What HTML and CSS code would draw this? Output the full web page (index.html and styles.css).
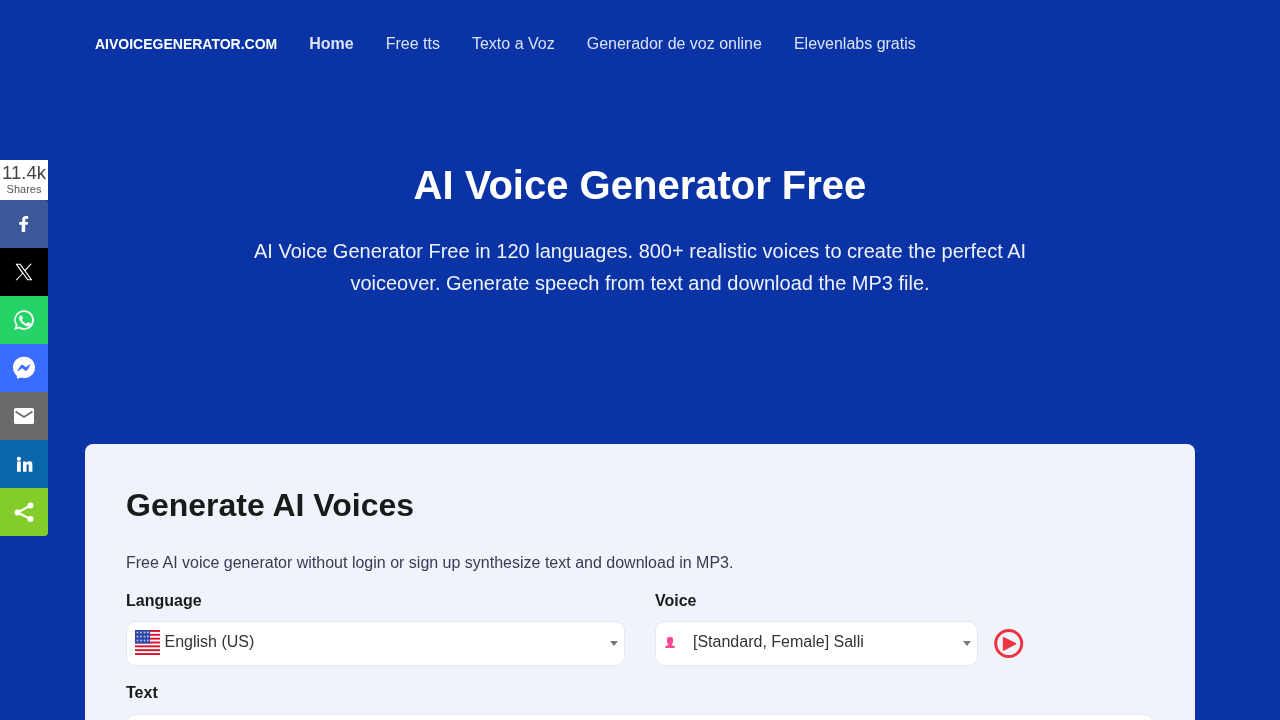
FILE: index.html
```html
<!DOCTYPE html>
<html lang="en">
<head>
<meta charset="utf-8">
<title>AI Voice Generator Free</title>
<link rel="stylesheet" href="styles.css">
</head>
<body>
<aside class="share">
  <div class="share-count"><span class="share-num">11.4k</span><span class="share-label">Shares</span></div>
  <a class="share-btn fb" href="#"><svg viewBox="0 0 24 24" width="24" height="24"><path fill="#fff" d="M13.200 20v-7.200h2.500l.4-2.900h-2.900V8.100c0-.8.2-1.400 1.400-1.400h1.600V4.100c-.3 0-1.200-.1-2.300-.1-2.200 0-3.700 1.300-3.700 3.700v2.200H7.200v2.900h2.500V20z"/></svg></a>
  <a class="share-btn tw" href="#"><svg viewBox="0 0 24 24" width="20" height="20"><path fill="#fff" d="M13.900 10.500 21.500 2h-1.800l-6.600 7.400L7.800 2H1.700l8 11.500L1.700 22h1.800l7-7.900 5.600 7.900h6.100zM4.200 3.300h2.800l12.700 17.500h-2.800z"/></svg></a>
  <a class="share-btn wa" href="#"><svg viewBox="0 0 24 24" width="24" height="24"><path fill="#fff" fill-rule="evenodd" d="M12.100 2.200a9.800 9.800 0 0 0-8.400 14.800L2.300 21.800l5-1.300a9.800 9.800 0 1 0 4.800-18.300zm0 1.800a8 8 0 1 1-4.300 14.800l-.4-.2-2.600.7.700-2.500-.3-.4A8 8 0 0 1 12.100 4z"/><path fill="#fff" d="M8.800 7.300c-.2 0-.5.100-.8.400-.3.300-1 1-1 2.400s1 2.800 1.200 3c.1.200 2 3.100 4.900 4.300 2.400 1 2.900.8 3.400.7.500 0 1.700-.7 1.900-1.300.2-.7.200-1.200.2-1.300-.1-.2-.3-.2-.6-.4l-1.900-.9c-.3-.1-.5-.1-.7.200l-.9 1.100c-.2.200-.3.200-.6.100-.3-.2-1.200-.5-2.300-1.500-.9-.8-1.400-1.700-1.600-2-.2-.3 0-.5.100-.6l.5-.5.300-.5c.1-.2 0-.4 0-.5l-.9-2.100c-.2-.5-.4-.5-.6-.5z"/></svg></a>
  <a class="share-btn ms" href="#"><svg viewBox="0 0 24 24" width="24" height="24"><path fill="#fff" d="M12 .8C5.800.8 1 5.400 1 11.400c0 3.100 1.300 5.900 3.500 7.800.2.200.3.400.3.700l.1 1.900c0 .6.600 1 1.200.8l2.200-.9c.2-.1.400-.1.600-.1 1 .3 2 .4 3.100.4 6.200 0 11-4.600 11-10.600S18.200.8 12 .8z"/><path fill="#3a6cff" d="m5.600 14.500 3.100-5c.5-.8 1.600-1 2.300-.4l2.500 1.900c.2.200.5.200.8 0l3.400-2.600c.4-.3 1 .2.700.6l-3.100 5c-.5.800-1.600 1-2.300.4l-2.500-1.900c-.2-.2-.5-.2-.8 0l-3.400 2.600c-.4.300-1-.2-.7-.6z"/></svg></a>
  <a class="share-btn em" href="#"><svg viewBox="0 0 24 24" width="24" height="24"><path fill="#fff" d="M3.800 4h16.400C21.200 4 22 4.800 22 5.800v12.400c0 1-.8 1.800-1.800 1.800H3.800C2.800 20 2 19.200 2 18.200V5.800C2 4.800 2.800 4 3.800 4z"/><path fill="none" stroke="#6a6a6a" stroke-width="1.800" d="m3.500 7.500 8.500 5.500 8.500-5.500"/></svg></a>
  <a class="share-btn li" href="#"><svg viewBox="0 0 24 24" width="24" height="24"><path fill="#fff" d="M5 9.500h3.800v10.200H5zM6.900 4.700a2.100 2.100 0 1 1 0 4.200 2.100 2.100 0 0 1 0-4.200zM11 9.500h3.500v1.400c.6-1 1.700-1.700 3-1.700 2.800 0 2.900 2 2.900 4.400v6.100h-3.600v-5c0-1.200-.1-2.500-1.100-2.500-1.300 0-1.200 1.200-1.200 2.500v5H11z"/></svg></a>
  <a class="share-btn sh" href="#"><svg viewBox="0 0 24 24" width="24" height="24"><g fill="#fff"><circle cx="18.500" cy="5.500" r="3"/><circle cx="5.500" cy="12.500" r="3"/><circle cx="18.500" cy="19" r="3"/></g><path stroke="#fff" stroke-width="2" fill="none" d="M18.500 5.500 5.500 12.500 18.500 19"/></svg></a>
</aside>

<header class="topbar">
  <nav class="nav">
    <a class="brand" href="#">AIVOICEGENERATOR.COM</a>
    <a class="nav-link active" href="#">Home</a>
    <a class="nav-link" href="#">Free tts</a>
    <a class="nav-link" href="#">Texto a Voz</a>
    <a class="nav-link" href="#">Generador de voz online</a>
    <a class="nav-link" href="#">Elevenlabs gratis</a>
  </nav>
</header>

<section class="hero">
  <h1>AI Voice Generator Free</h1>
  <p>AI Voice Generator Free in 120 languages. 800+ realistic voices to create the perfect AI voiceover. Generate speech from text and download the MP3 file.</p>
</section>

<main class="card">
  <h2>Generate AI Voices</h2>
  <p class="lead">Free AI voice generator without login or sign up synthesize text and download in MP3.</p>
  <div class="fields">
    <div class="field lang">
      <label>Language</label>
      <div class="select">
        <svg class="flag" viewBox="0 0 25 25" width="25" height="25"><rect width="25" height="25" fill="#fff"/><g fill="#d8122d"><rect y="0" width="25" height="1.920"/><rect y="3.850" width="25" height="1.920"/><rect y="7.690" width="25" height="1.920"/><rect y="11.540" width="25" height="1.920"/><rect y="15.380" width="25" height="1.920"/><rect y="19.230" width="25" height="1.920"/><rect y="23.080" width="25" height="1.920"/></g><rect width="15" height="13.460" fill="#2f46a8"/><g fill="#b9c6ee"><circle cx="2.500" cy="2.500" r="1"/><circle cx="6" cy="2.500" r="1"/><circle cx="9.500" cy="2.500" r="1"/><circle cx="12.800" cy="2.500" r="1"/><circle cx="2.500" cy="6.500" r="1"/><circle cx="6" cy="6.500" r="1"/><circle cx="9.500" cy="6.500" r="1"/><circle cx="12.800" cy="6.500" r="1"/><circle cx="2.500" cy="10.500" r="1"/><circle cx="6" cy="10.500" r="1"/><circle cx="9.500" cy="10.500" r="1"/><circle cx="12.800" cy="10.500" r="1"/></g></svg>
        <span class="value">English (US)</span>
        <span class="caret"></span>
      </div>
    </div>
    <div class="field voice">
      <label>Voice</label>
      <div class="voice-row">
        <div class="select voice-select">
          <svg class="person" viewBox="0 0 10 11" width="10" height="11"><path fill="#ff4a93" d="M2 1.500Q2 0 3.500 0h3Q8 0 8 1.500V5Q8 6.500 6.800 7.200V8L9.500 9.200 10 11H0L.5 9.200 3.200 8V7.200Q2 6.500 2 5z"/></svg>
          <span class="value">[Standard, Female] Salli</span>
          <span class="caret"></span>
        </div>
        <button class="play" type="button" aria-label="Play"><svg viewBox="0 0 30 30" width="30" height="30"><circle cx="14.700" cy="14.500" r="13" fill="none" stroke="#ee3340" stroke-width="3"/><path fill="#ee3340" stroke="#ee3340" stroke-width="1" stroke-linejoin="round" d="M9.300 8.300 22.200 14.700 9.300 21.500z"/></svg></button>
      </div>
    </div>
  </div>
  <label class="text-label">Text</label>
  <div class="textarea"></div>
</main>
</body>
</html>
```
FILE: styles.css
```css
* { box-sizing: border-box; }
html, body { margin: 0; height: 720px; overflow: hidden; }
body {
  background: #0a33a5;
  font-family: "Liberation Sans", Arial, sans-serif;
  color: #1a1a1a;
  position: relative;
}
a { text-decoration: none; color: inherit; }

.share, .topbar, .hero, .card { will-change: transform; }

.share { position: absolute; left: 0; top: 160px; width: 48px; display: flex; flex-direction: column; z-index: 5; }
.share-count { height: 40px; background: #fff; display: flex; flex-direction: column; align-items: center; color: #444; }
.share-num { font-size: 18.500px; line-height: 25px; }
.share-label { font-size: 11px; line-height: 13px; color: #555; margin-top: -2px; }
.share-btn { height: 48px; display: flex; align-items: center; justify-content: center; }
.fb { background: #3b5998; border-top-right-radius: 3px; }
.tw { background: #000; }
.wa { background: #25d366; }
.ms { background: #3a6cff; }
.em { background: #6a6a6a; }
.li { background: #0a66aa; }
.sh { background: #84cc2a; border-bottom-right-radius: 4px; }

.topbar { height: 87px; padding: 0 85px; }
.nav { display: flex; align-items: center; height: 87px; gap: 32px; padding-left: 10px; }
.brand { color: #fff; font-weight: 700; font-size: 14px; }
.nav-link { color: #dbe3f7; font-size: 16px; }
.nav-link.active { font-weight: 700; }

.hero { text-align: center; padding-top: 76px; height: 357px; }
.hero h1 { margin: 0; color: #fff; font-size: 40px; line-height: 44px; font-weight: 700; }
.hero p { margin: 28px auto 0; width: 790px; color: #eef2fb; font-size: 20px; line-height: 32px; }

.card { margin: 0 85px; background: #eff3fb; border-radius: 8px; padding: 41px; height: 400px; }
.card h2 { margin: 0; font-size: 32px; line-height: 40px; font-weight: 700; }
.lead { margin: 26px 0 0; font-size: 16px; line-height: 24px; color: #3a3a55; }
.fields { display: flex; gap: 30px; margin-top: 14px; }
.field { display: flex; flex-direction: column; }
.lang { width: 499px; }
.voice { flex: 1; }
.field label, .text-label { display: block; font-size: 16px; line-height: 24px; font-weight: 700; color: #1a1a1a; }
.field label { margin-bottom: 8px; }
.select { height: 45px; background: #fff; border: 1px solid #e4e7ef; border-radius: 10px; display: flex; align-items: center; position: relative; padding-left: 8px; color: #333; font-size: 16px; }
.flag { margin: -2px 4.500px 0 0; flex: none; }
.value { margin-top: -4px; }
.caret { position: absolute; right: 6px; top: 19px; border: 4px solid transparent; border-top: 5px solid #777; border-bottom: 0; }
.voice-row { display: flex; align-items: center; gap: 16px; }
.voice-select { width: 323px; }
.person { margin: -2px 18px 0 1px; flex: none; }
.play { border: 0; background: none; padding: 0; width: 30px; height: 30px; display: block; }
.text-label { margin-top: 15px; }
.textarea { height: 200px; margin-top: 9px; background: #fff; border: 1px solid #e4e7ef; border-radius: 10px; }
```
